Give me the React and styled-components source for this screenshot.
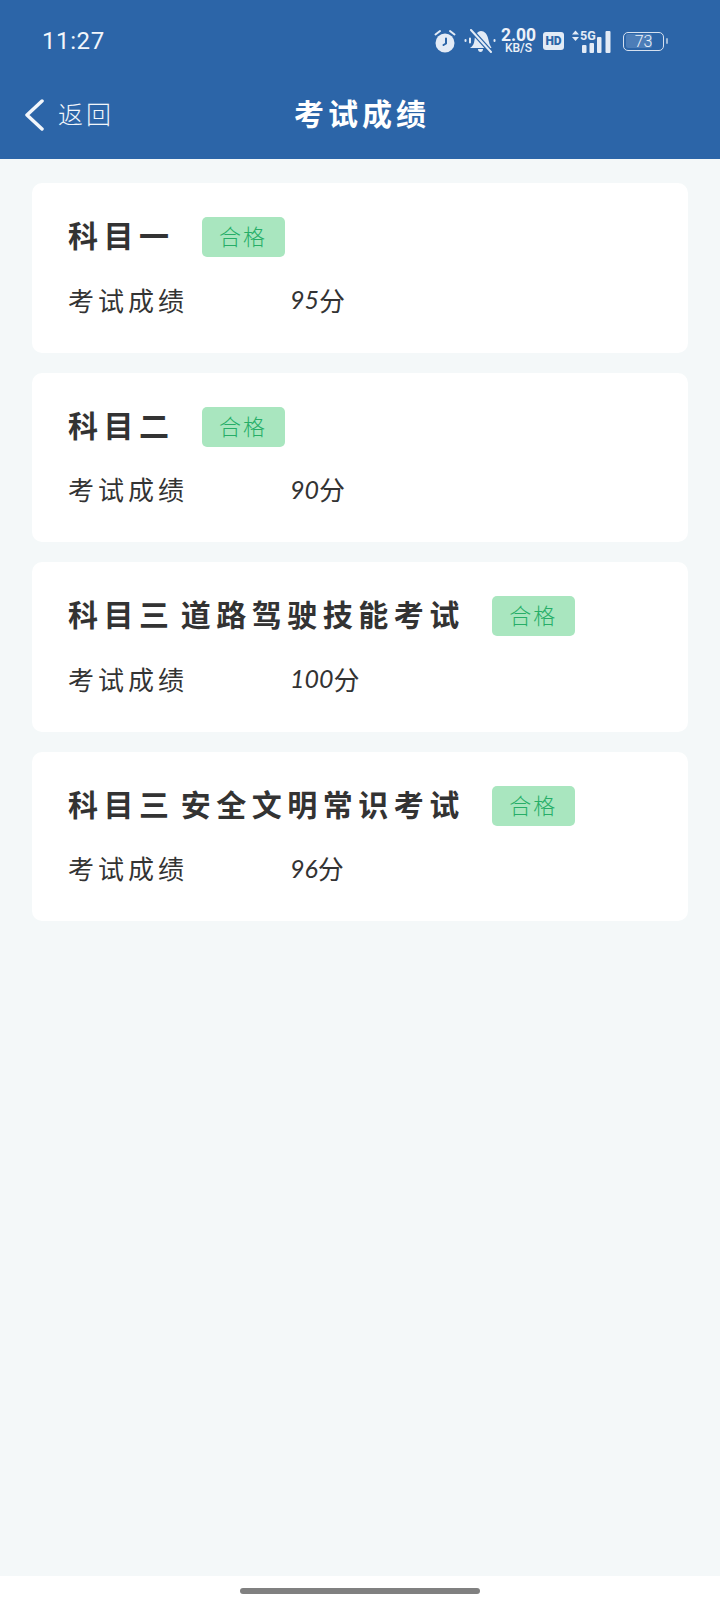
import React from 'react';
import styled, { createGlobalStyle } from 'styled-components';

const GlobalStyle = createGlobalStyle`
  html, body { margin: 0; padding: 0; }
  body { font-family: "Noto Sans CJK SC", "Noto Sans", sans-serif; background: #f4f8f9; }
`;

const Page = styled.div`
  width: 720px;
  height: 1608px;
  display: flex;
  flex-direction: column;
  background: #f4f8f9;
  overflow: hidden;
`;

const Header = styled.header`
  background: #2c65a8;
  height: 159px;
  flex-shrink: 0;
  color: #fff;
`;

const StatusBar = styled.div`
  height: 82px;
  display: flex;
  align-items: center;
  justify-content: space-between;
  padding: 0 53px 0 42px;
  box-sizing: border-box;
`;

const Time = styled.div`
  font-family: Roboto, "Noto Sans", sans-serif;
  font-size: 24px;
  font-weight: 400;
  letter-spacing: 0.6px;
  color: #f2f6fb;
`;

const StatusIcons = styled.div`
  display: flex;
  align-items: center;
  color: #e3ebf6;
`;

const IconSlot = styled.span`
  display: flex;
  margin-left: ${(p) => p.$gap || 0}px;
`;

const Speed = styled.div`
  margin-left: 5px;
  width: 35px;
  display: flex;
  flex-direction: column;
  align-items: center;
  gap: 1px;
  font-family: Roboto, sans-serif;
  font-weight: 700;
  color: #edf2f9;
`;

const SpeedValue = styled.span`
  font-size: 17.5px;
  line-height: 14px;
`;

const SpeedUnit = styled.span`
  font-size: 12px;
  line-height: 11px;
  font-weight: 500;
`;

const HdBadge = styled.span`
  margin-left: 7px;
  width: 21px;
  height: 18px;
  border-radius: 3px;
  background: #e3ebf6;
  color: #2c65a8;
  font-family: Roboto, sans-serif;
  font-size: 12px;
  font-weight: 900;
  display: flex;
  align-items: center;
  justify-content: center;
`;

const Battery = styled.span`
  position: relative;
  margin-left: 11px;
  width: 41px;
  height: 19px;
  box-sizing: border-box;
  border: 1.5px solid #d5e0ef;
  border-radius: 5px;
  margin-right: 3px;
  padding: 1.5px;
  display: flex;
`;

const BatteryFill = styled.span`
  width: 73%;
  background: #4c7db8;
  border-radius: 2px;
`;

const BatteryText = styled.span`
  position: absolute;
  inset: 0;
  display: flex;
  align-items: center;
  justify-content: center;
  font-family: Roboto, sans-serif;
  font-size: 16px;
  font-weight: 300;
  color: #eef3fa;
`;

const BatteryCap = styled.span`
  position: absolute;
  right: -5px;
  top: 5px;
  width: 2px;
  height: 6px;
  background: #9db9d9;
  border-radius: 1px;
`;

const NavBar = styled.div`
  position: relative;
  height: 77px;
  display: flex;
  align-items: flex-start;
  padding: 17px 0 0 24px;
  box-sizing: border-box;
`;

const BackText = styled.span`
  margin-left: 14px;
  margin-top: -1px;
  font-size: 25px;
  font-weight: 300;
  line-height: 30px;
  letter-spacing: 3px;
  color: #f2f6fb;
`;

const NavTitle = styled.h1`
  position: absolute;
  left: 4px;
  right: 0;
  top: 11px;
  margin: 0;
  text-align: center;
  font-size: 30px;
  font-weight: 700;
  line-height: 38px;
  letter-spacing: 4px;
  color: #fff;
`;

const List = styled.main`
  flex: 1;
  padding: 24px 32px 0;
  display: flex;
  flex-direction: column;
  gap: 20px;
`;

const Card = styled.section`
  height: 169.5px;
  box-sizing: border-box;
  background: #fff;
  border-radius: 10px;
  padding: 34px 36px 0;
`;

const TitleRow = styled.div`
  display: flex;
  align-items: center;
  height: 40px;
`;

const CardTitle = styled.h2`
  margin: 0;
  font-size: 30px;
  font-weight: 700;
  line-height: 36px;
  padding-bottom: 6px;
  letter-spacing: 5.5px;
  word-spacing: -6px;
  color: #333;
`;

const PassBadge = styled.span`
  margin-left: 27px;
  width: 83px;
  height: 40px;
  box-sizing: border-box;
  border-radius: 5px;
  background: #a9e6bf;
  color: #27ae68;
  font-size: 22px;
  font-weight: 300;
  line-height: 36px;
  padding-bottom: 4px;
  letter-spacing: 2px;
  text-align: center;
`;

const ScoreRow = styled.div`
  display: flex;
  align-items: center;
  margin-top: 24px;
  height: 36px;
  font-size: 26px;
  font-weight: 400;
  color: #333;
`;

const ScoreLabel = styled.span`
  width: 222px;
  letter-spacing: 4px;
`;

const ScoreValue = styled.span`
  display: flex;
  align-items: center;
`;

const ScoreNumber = styled.span`
  font-family: Lato, "Noto Sans", sans-serif;
  font-style: italic;
  font-weight: 400;
  font-size: 25px;
`;

const HomeArea = styled.div`
  height: 32px;
  flex-shrink: 0;
  background: #fff;
  display: flex;
  justify-content: center;
  padding-top: 12px;
  box-sizing: border-box;
`;

const HomePill = styled.div`
  width: 240px;
  height: 6px;
  border-radius: 3px;
  background: #808080;
`;

const AlarmIcon = () => (
  <svg width="22" height="24" viewBox="0 0 22 24" fill="none">
    <circle cx="11" cy="14" r="9.500" fill="currentColor" />
    <path d="M12 9.500v5l-2.500 1.500" stroke="#2c65a8" strokeWidth="2" strokeLinecap="round" strokeLinejoin="round" />
    <path d="M1.500 5.500 6 2M20.500 5.500 16 2" stroke="currentColor" strokeWidth="2" strokeLinecap="round" />
  </svg>
);

const MutedBellIcon = () => (
  <svg width="32" height="24" viewBox="0 0 32 24" fill="none">
    <path d="M6 19c3-2 4-4 4.500-8 .5-5 3-9 6.500-9s6 3 7 7l1.500 6 2 4z" fill="currentColor" />
    <path d="M14 20h5c0 2-1 3-2.500 3S14 22 14 20z" fill="currentColor" />
    <path d="M8 2l18 20" stroke="#2c65a8" strokeWidth="4.500" />
    <path d="M7 1l20 22" stroke="currentColor" strokeWidth="2" strokeLinecap="round" />
    <path d="M6 9.500v4M1.500 11v1M30.500 11v1" stroke="currentColor" strokeWidth="2" strokeLinecap="round" />
  </svg>
);

const SignalIcon = () => (
  <svg width="41" height="24" viewBox="0 0 41 24" fill="currentColor">
    <path d="M1 5.500 4.500 1.500 8 5.500zM1 8l3.500 4L8 8z" />
    <text x="9" y="11" fontFamily="Roboto, sans-serif" fontSize="12.500" fontWeight="700">5G</text>
    <rect x="11" y="16" width="4.500" height="8" rx="1" />
    <rect x="18.500" y="14" width="4.500" height="10" rx="1" />
    <rect x="26" y="8" width="4.500" height="16" rx="1" />
    <rect x="34.500" y="2" width="5" height="22" rx="1" />
  </svg>
);

const BackIcon = () => (
  <svg width="20" height="32" viewBox="0 0 20 32" fill="none">
    <path d="M18 2 3 16l15 14" stroke="#f2f6fb" strokeWidth="3.500" strokeLinecap="round" strokeLinejoin="round" />
  </svg>
);

const results = [
  { name: '科目一', score: '95' },
  { name: '科目二', score: '90' },
  { name: '科目三 道路驾驶技能考试', score: '100' },
  { name: '科目三 安全文明常识考试', score: '96' },
];

export default function App() {
  return (
    <Page>
      <GlobalStyle />
      <Header>
        <StatusBar>
          <Time>11:27</Time>
          <StatusIcons>
            <IconSlot><AlarmIcon /></IconSlot>
            <IconSlot $gap={8}><MutedBellIcon /></IconSlot>
            <Speed>
              <SpeedValue>2.00</SpeedValue>
              <SpeedUnit>KB/S</SpeedUnit>
            </Speed>
            <HdBadge>HD</HdBadge>
            <IconSlot $gap={7}><SignalIcon /></IconSlot>
            <Battery>
              <BatteryFill />
              <BatteryText>73</BatteryText>
              <BatteryCap />
            </Battery>
          </StatusIcons>
        </StatusBar>
        <NavBar>
          <BackIcon />
          <BackText>返回</BackText>
          <NavTitle>考试成绩</NavTitle>
        </NavBar>
      </Header>
      <List>
        {results.map((r) => (
          <Card key={r.name}>
            <TitleRow>
              <CardTitle>{r.name}</CardTitle>
              <PassBadge>合格</PassBadge>
            </TitleRow>
            <ScoreRow>
              <ScoreLabel>考试成绩</ScoreLabel>
              <ScoreValue>
                <ScoreNumber>{r.score}</ScoreNumber>分
              </ScoreValue>
            </ScoreRow>
          </Card>
        ))}
      </List>
      <HomeArea>
        <HomePill />
      </HomeArea>
    </Page>
  );
}
